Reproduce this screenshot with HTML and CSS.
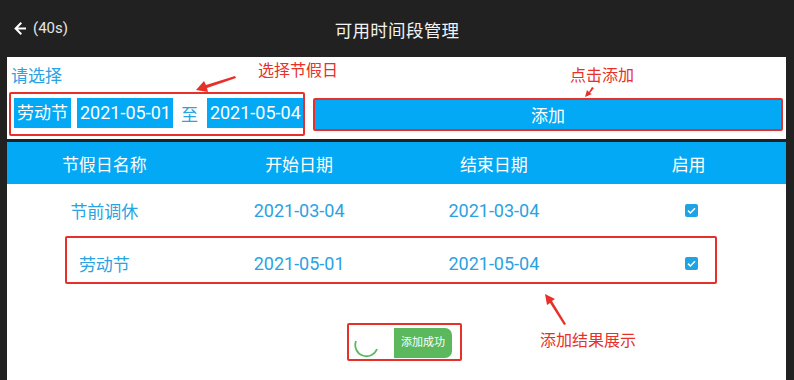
FILE: index.html
```html
<!DOCTYPE html>
<html lang="zh">
<head>
<meta charset="utf-8">
<title>可用时间段管理</title>
<link rel="stylesheet" href="styles.css">
</head>
<body>
<div class="app">
  <header class="topbar">
    <div class="back">
      <svg class="back-arrow" width="13" height="15" viewBox="0 0 13 15"><path d="M12 7.5H2M7.3 1.8L1.6 7.5l5.7 5.7" fill="none" stroke="#fff" stroke-width="2"/></svg>
      <span class="count">(40s)</span>
    </div>
    <h1 class="title">可用时间段管理</h1>
  </header>

  <section class="picker">
    <div class="prompt">请选择</div>
    <div class="pick-row">
      <div class="pick-box">
        <span class="chip">劳动节</span>
        <span class="chip num">2021-05-01</span>
        <span class="to">至</span>
        <span class="chip num">2021-05-04</span>
      </div>
      <div class="add-wrap"><button class="add-btn">添加</button></div>
    </div>
    <span class="note note-pick">选择节假日</span>
    <svg class="arrow arrow-pick" width="44" height="20" viewBox="0 0 44 20"><polygon points="40,2 41,4 12,14 13,18 1,16 9,7 11,11" fill="#e8302a"/></svg>
    <span class="note note-add">点击添加</span>
    <svg class="arrow arrow-add" width="12" height="12" viewBox="0 0 12 12"><polygon points="8,1 10,2 6,7 8,8 1,11 3,4 5,6" fill="#e8302a"/></svg>
  </section>

  <section class="table">
    <div class="thead">
      <span>节假日名称</span><span>开始日期</span><span>结束日期</span><span>启用</span>
    </div>
    <div class="trow">
      <span>节前调休</span><span class="num">2021-03-04</span><span class="num">2021-03-04</span>
      <span><i class="check"><svg width="13" height="13" viewBox="0 0 13 13"><path d="M3 6.6l2.4 2.4L10 4.3" fill="none" stroke="#fff" stroke-width="1.5"/></svg></i></span>
    </div>
    <div class="trow">
      <span>劳动节</span><span class="num">2021-05-01</span><span class="num">2021-05-04</span>
      <span><i class="check"><svg width="13" height="13" viewBox="0 0 13 13"><path d="M3 6.6l2.4 2.4L10 4.3" fill="none" stroke="#fff" stroke-width="1.5"/></svg></i></span>
    </div>
    <div class="mark-row"></div>

    <div class="toast">
      <svg class="spinner" width="28" height="22" viewBox="0 0 28 22"><path d="M2 4 A 11 11 0 0 0 23 12" fill="none" stroke="#5cb85c" stroke-width="1.8"/></svg>
      <span class="toast-msg">添加成功</span>
    </div>
    <svg class="arrow arrow-result" width="24" height="34" viewBox="0 0 24 34"><polygon points="1,1 11,6 8,8 22,31 20,32 6,10 3,12" fill="#e8302a"/></svg>
    <span class="note note-result">添加结果展示</span>
  </section>
</div>
</body>
</html>
```

FILE: styles.css
```css
* { box-sizing: border-box; }
html, body { margin: 0; padding: 0; }
body {
  background: #212121;
  font-family: "Roboto", "Noto Sans CJK SC", sans-serif;
  width: 794px;
  height: 380px;
  overflow: hidden;
}
.app { width: 794px; height: 380px; }

.topbar {
  position: relative;
  height: 57px;
  display: flex;
  align-items: center;
  justify-content: center;
}
.back {
  position: absolute;
  left: 14px;
  top: 20px;
  display: flex;
  align-items: center;
  gap: 6px;
  color: #e6e6e6;
}
.back-arrow { display: block; }
.count { font-size: 15px; line-height: 16px; }
.title {
  margin: 0;
  font-size: 17.5px;
  font-weight: 400;
  color: #f2f2f2;
  letter-spacing: 0.3px;
  padding-top: 1px;
}

.picker {
  position: relative;
  margin-left: 7px;
  width: 779px;
  height: 82px;
  background: #fff;
  padding-top: 9px;
}
.prompt {
  margin-left: 4px;
  font-size: 17px;
  line-height: 20px;
  color: #2ba2e2;
}
.pick-row {
  display: flex;
  align-items: center;
  margin-top: 6px;
}
.pick-box {
  margin-left: 2px;
  height: 44px;
  border: 2px solid #e8302a;
  border-radius: 2px;
  display: flex;
  align-items: center;
  padding: 0 0 2px 3px;
}
.chip {
  background: #03a9f4;
  color: #fff;
  font-size: 17px;
  line-height: 30px;
  height: 30px;
  padding: 0 3px;
  margin-right: 6px;
}
.chip.num { font-size: 18px; padding: 0 2px 0 3px; }
.chip:last-child { margin-right: 0; }
.to {
  font-size: 17px;
  color: #2ba2e2;
  margin: 0 9px 0 2px;
}
.add-wrap {
  margin-left: 8px;
  flex: 1;
  margin-right: 3px;
  border: 2px solid #e8302a;
  border-radius: 2px;
  height: 33px;
}
.add-btn {
  display: block;
  width: 100%;
  height: 100%;
  border: 0;
  background: #03a9f4;
  color: #fff;
  font-family: inherit;
  font-size: 17px;
  padding: 0;
}

.note {
  position: absolute;
  color: #e8302a;
  font-size: 16px;
  line-height: 18px;
}
.arrow { position: absolute; display: block; }
.note-pick { left: 251px; top: 5px; }
.arrow-pick { left: 188px; top: 17px; }
.note-add { left: 563px; top: 10px; }
.arrow-add { left: 577px; top: 29px; }

.table {
  position: relative;
  margin-top: 3px;
  margin-left: 7px;
  width: 779px;
  height: 238px;
  background: #fff;
}
.thead, .trow {
  display: grid;
  grid-template-columns: repeat(4, 1fr);
  align-items: center;
  justify-items: center;
}
.thead {
  height: 42px;
  background: #03a9f4;
  color: #fff;
  font-size: 17px;
}
.trow {
  height: 53px;
  color: #2ba2e2;
  font-size: 17px;
}
.trow .num { font-size: 18px; }
.check {
  display: block;
  width: 13px;
  height: 13px;
  border-radius: 2px;
  background: #1fa3e3;
  margin-left: 6px;
}
.check svg { display: block; }

.mark-row {
  position: absolute;
  left: 58px;
  top: 94px;
  width: 652px;
  height: 48px;
  border: 2px solid #e8302a;
  border-radius: 2px;
}

.toast {
  position: absolute;
  left: 340px;
  top: 181px;
  width: 115px;
  height: 38px;
  border: 2px solid #e8302a;
  border-radius: 2px;
  display: flex;
  align-items: center;
  padding: 3px 8px 1px 5px;
}
.spinner { display: block; margin-top: 10px; }
.toast-msg {
  margin-left: 12px;
  width: 58px;
  height: 30px;
  background: #5cb85c;
  border-radius: 0 7px 7px 0;
  color: #fff;
  font-size: 11px;
  line-height: 30px;
  text-align: center;
}
.arrow-result { left: 537px; top: 151px; }
.note-result { left: 533px; top: 190px; }
```
